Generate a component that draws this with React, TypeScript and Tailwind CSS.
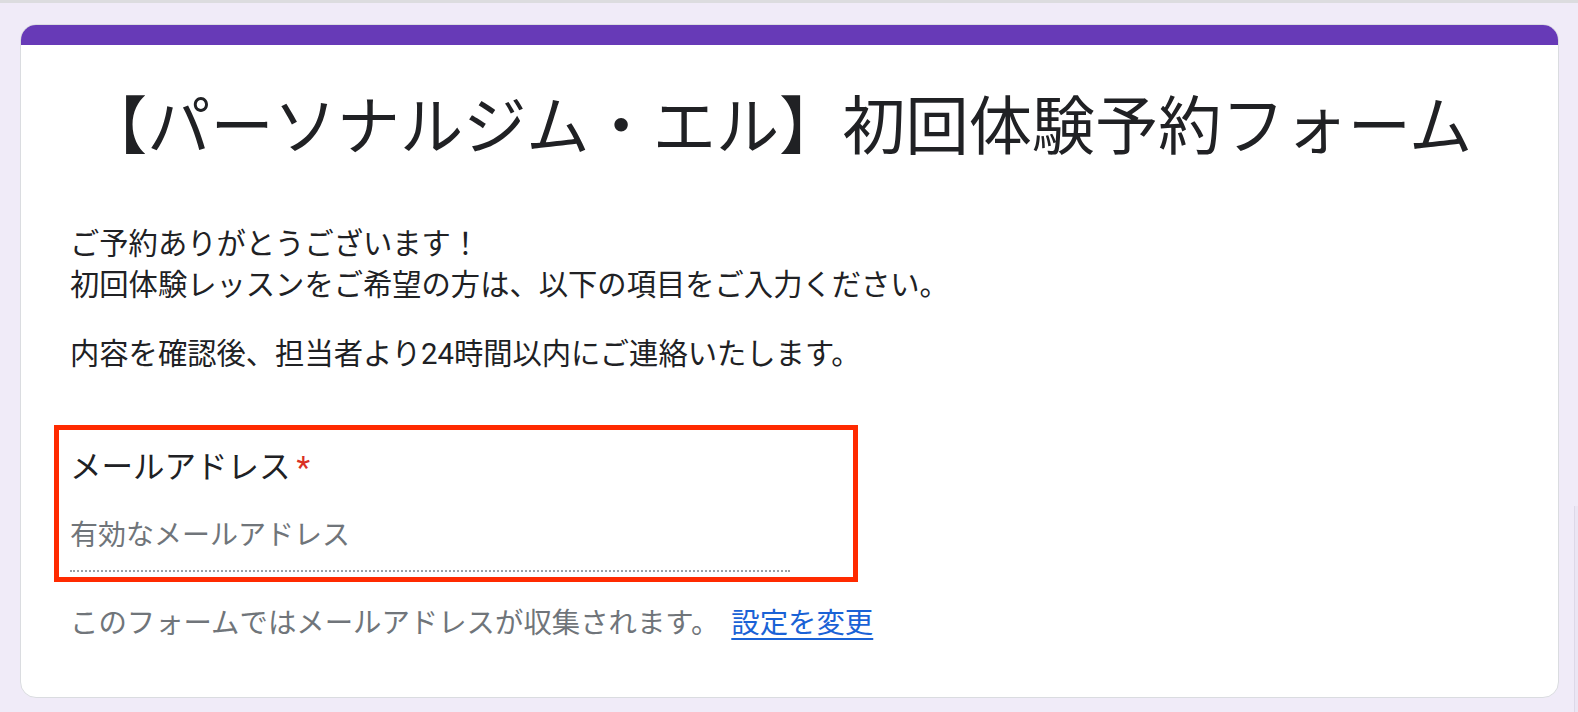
import * as React from "react";

// Google Forms style header card for the trial-lesson booking form

const FONT = {
  fontFamily: 'Roboto, "Noto Sans CJK JP", sans-serif',
};

export default function App() {
  return (
    <div
      className="relative h-[712px] w-full overflow-hidden border-t-[3px] border-[#dcdcdf] bg-[#f0ebf8] pt-[21px]"
      style={FONT}
    >
      {/* Card */}
      <div className="ml-[20px] w-[1539px] overflow-hidden rounded-[16px] border border-[#dadce0] bg-white">
        {/* Accent bar */}
        <div className="h-[20px] bg-[#673ab7]" />

        <div className="pb-[53px] pl-[49px] pr-[40px] pt-[42px]">
          {/* Title */}
          <h1 className="whitespace-nowrap pl-[14px] text-[63.2px] font-normal leading-[80px] text-[#202124]">
            【パーソナルジム・エル】初回体験予約フォーム
          </h1>

          {/* Description */}
          <div className="mt-[57px] text-[29.3px] leading-[41px] text-[#202124]">
            <p>
              ご予約ありがとうございます！
              <br />
              初回体験レッスンをご希望の方は、以下の項目をご入力ください。
            </p>
            <p className="mt-[28px]">
              内容を確認後、担当者より24時間以内にご連絡いたします。
            </p>
          </div>

          {/* Email question (highlighted) */}
          <div className="-ml-[16px] mt-[50px] w-[804px] border-[5px] border-[#ff2a00] pb-[5px] pl-[11px] pt-[16px]">
            <div className="text-[31.5px] leading-[44px] text-[#202124]">
              メールアドレス
              <span className="pl-[6px] text-[#d93025]">*</span>
            </div>
            <div className="mt-[26px] w-[720px] border-b-2 border-dotted border-[#9aa0a6] pb-[14px] text-[28px] leading-[40px] text-[#70757a]">
              有効なメールアドレス
            </div>
          </div>

          {/* Footer note */}
          <div className="mt-[22px] flex items-center text-[28.4px] leading-[40px] text-[#70757a]">
            <span>このフォームではメールアドレスが収集されます。</span>
            <a
              href="#"
              className="ml-[12px] text-[#1a62d6] underline underline-offset-[5px]"
            >
              設定を変更
            </a>
          </div>
        </div>
      </div>

      {/* Faint scroll edge on the right */}
      <div className="absolute bottom-0 right-0 top-[503px] w-[4px] border-l border-[#ddd8e8] bg-[#ebe6f4]" />
    </div>
  );
}
